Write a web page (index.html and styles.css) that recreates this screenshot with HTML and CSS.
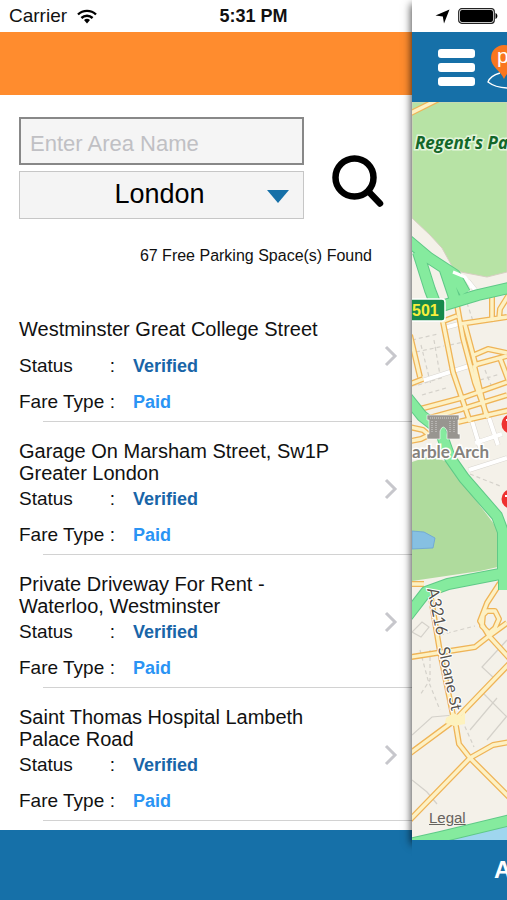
FILE: index.html
```html
<!DOCTYPE html>
<html lang="en">
<head>
  <meta charset="UTF-8"/>
  <meta name="viewport" content="width=device-width, initial-scale=1"/>
  <title>Parking</title>
  <link rel="stylesheet" href="styles.css">
</head>
<body>
  <div class="status-bar">
    <div class="carrier">
      <span>Carrier</span>
      <svg width="20" height="15" viewBox="0 0 20 15" fill="none" stroke="#000" stroke-width="2.4">
        <path d="M1 5.5a13 13 0 0 1 18 0"/>
        <path d="M4.4 9a8.2 8.2 0 0 1 11.2 0"/>
        <path d="M10 14.5l-3-3.4a4.4 4.4 0 0 1 6 0z" fill="#000" stroke="none"/>
      </svg>
    </div>
    <strong class="time">5:31 PM</strong>
    <div class="indicators">
      <svg width="15" height="15" viewBox="0 0 15 15"><path d="M14.5 .5L9 14.5 7.8 7.4.5 6.4z"/></svg>
      <svg width="40" height="16" viewBox="0 0 40 16">
        <rect x=".7" y=".7" width="35.6" height="14.6" rx="3" fill="#fff" stroke="#222" stroke-width="1.2"/>
        <rect x="2" y="2" width="33" height="12" rx="2"/>
        <path d="M37.5 5c2.5 1 2.5 5 0 6z"/>
      </svg>
    </div>
  </div>

  <div class="app">
    <aside class="drawer">
      <div class="drawer-header"></div>

      <form class="search">
        <div class="fields">
          <input class="area" type="text" placeholder="Enter Area Name" aria-label="Area name">
          <div class="city">
            <select aria-label="City">
              <option>London</option>
            </select>
            <svg class="arrow" width="22" height="13" viewBox="0 0 22 13"><path d="M0 0h22L11 13z" fill="#1670a8"/></svg>
          </div>
        </div>
        <button class="search-btn" type="button" aria-label="Search">
          <svg width="52" height="52" viewBox="0 0 52 52" fill="none" stroke="#000">
            <circle cx="22.5" cy="22.5" r="19" stroke-width="6.5"/>
            <path d="M37 37l11 11.5" stroke-width="6.5" stroke-linecap="round"/>
          </svg>
        </button>
      </form>

      <p class="found">67 Free Parking Space(s) Found</p>

      <ul class="results">
        <li>
          <a href="#">
            <div class="info">
              <h2>Westminster Great College Street</h2>
              <dl>
                <dt>Status</dt><dd class="verified">Verified</dd>
                <dt>Fare Type</dt><dd class="paid">Paid</dd>
              </dl>
            </div>
            <svg class="chevron" width="14" height="22" viewBox="0 0 14 22"><path d="M2 2l9 9-9 9"/></svg>
          </a>
        </li>
        <li>
          <a href="#">
            <div class="info">
              <h2>Garage On Marsham Street, Sw1P Greater London</h2>
              <dl>
                <dt>Status</dt><dd class="verified">Verified</dd>
                <dt>Fare Type</dt><dd class="paid">Paid</dd>
              </dl>
            </div>
            <svg class="chevron" width="14" height="22" viewBox="0 0 14 22"><path d="M2 2l9 9-9 9"/></svg>
          </a>
        </li>
        <li>
          <a href="#">
            <div class="info">
              <h2>Private Driveway For Rent - Waterloo, Westminster</h2>
              <dl>
                <dt>Status</dt><dd class="verified">Verified</dd>
                <dt>Fare Type</dt><dd class="paid">Paid</dd>
              </dl>
            </div>
            <svg class="chevron" width="14" height="22" viewBox="0 0 14 22"><path d="M2 2l9 9-9 9"/></svg>
          </a>
        </li>
        <li>
          <a href="#">
            <div class="info">
              <h2>Saint Thomas Hospital Lambeth Palace Road</h2>
              <dl>
                <dt>Status</dt><dd class="verified">Verified</dd>
                <dt>Fare Type</dt><dd class="paid">Paid</dd>
              </dl>
            </div>
            <svg class="chevron" width="14" height="22" viewBox="0 0 14 22"><path d="M2 2l9 9-9 9"/></svg>
          </a>
        </li>
      </ul>

      <div class="drawer-footer"></div>
    </aside>

    <main class="main">
      <div class="panel">
        <header class="main-header">
          <button class="menu" type="button" aria-label="Menu">
            <span></span><span></span><span></span>
          </button>
          <svg class="logo" width="50" height="48" viewBox="0 0 50 48">
            <path d="M13 30Q3 33 1 39q9 7 26 6 15-1 22-7-8-7-20-9" fill="none" stroke="#fff" stroke-width="1.4"/>
            <path d="M17 36C14 28 4 24 4 15a13 13 0 0 1 26 0c0 9-10 13-13 21z" fill="#f9761f"/>
            <text x="10" y="20" font-size="21" fill="#fff">p</text>
          </svg>
        </header>

        <div class="map">
          <svg class="map-canvas" viewBox="412 102 95 738" preserveAspectRatio="xMinYMin slice">
            <rect x="412" y="102" width="95" height="738" fill="#f4f1e9"/>

            <!-- parks and water -->
            <path d="M412 102h95v170l-20 5-26-5-8-4-11-20-12-13-18-17z" fill="#b7e3a5" stroke="#d5cfc0"/>
            <path d="M412 462l18-6 24 8 14 26 29 38 5 20v18l-22 5-68 10z" fill="#afdb9d"/>
            <path d="M412 531l12 1 11 6-2 10-21 1z" fill="#86c0e2" stroke="#6aa2d6" stroke-width=".8"/>
            <path d="M425 842l82-18v18z" fill="#9fd6ee"/>

            <!-- building lines -->
            <g fill="none" stroke="#d4d1ca" stroke-width="1.2">
              <path d="M507 640l-25 27 13 12M480 690l27 27M470 730l27-32M487 740l20-24M412 735l20-18 22-2M412 780l15 12 10 12M412 632l10-10 7 5-8 10z"/>
              <path stroke-dasharray="4 3" d="M420 650l8 30 12 30M430 650v30l-10 15M440 635l35-9M462 720l12 27M412 340l26-6M416 352l28-6M421 345l10 40M434 340l6 35M418 385l26-8M422 395l24-7M467 303l6 18M480 380l20-6M485 370l8 20M450 345l14-3M478 405l8-2M470 474l30 12"/>
            </g>

            <!-- minor roads -->
            <g fill="none" stroke="#d9d6d0" stroke-width="5">
              <path d="M472 421l9 30M489 418l9 27M475 443l27-9M469 470l38-12M444 328l18-5M412 384l60-19M468 281l8 10"/>
            </g>
            <g fill="none" stroke="#fff" stroke-width="4">
              <path d="M472 421l9 30M489 418l9 27M475 443l27-9M469 470l38-12M444 328l18-5M412 384l60-19M468 281l8 10"/>
            </g>

            <!-- main streets: casing first, fill on top -->
            <defs>
              <g id="streets" fill="none" stroke-linejoin="round">
                <path d="M405 116l34-17"/>
                <path d="M457 305l6 33 12 45 13 35M443 322l10 50 17 50M441 322l16-6M460 324l47-7M465 325l8 30 3 12M492 293v28M510 293l-10 16-1 10M474 355l14-6 19 4M474 365l33-9M474 365l12 50M410 335l10 42M410 384l13-5"/>
                <path d="M420 409l45-12 42-15M422 420l40-11 45-14M458 422l52-12M500 358l9 24M405 426l18 4 6 5-8 4-16 3M428 435l14-4"/>
                <path d="M431 598l9 54 14 68M405 658l70-11 14-11 22 24M500 583l-13 20-7 18 9 15 18-13M487 611h8l4 8-4 9-6 5-7-7 1-11z"/>
                <path d="M405 757l50-37 54-56M455 720l4 24 11 14 42 42M405 825l65-67 23-13 17-3M412 584h12"/>
              </g>
            </defs>
            <use href="#streets" stroke="#efb457" stroke-width="6"/>
            <use href="#streets" stroke="#fdf1c4" stroke-width="3.4"/>
            <path d="M446 718l7-5 8 3 4-5v13l-11 2-9-3z" fill="#fdf2bf"/>

            <!-- trunk roads -->
            <defs>
              <g id="trunk" fill="none" stroke-linejoin="round">
                <path d="M405 238l24 20 26 17 10 18M418 252l12 38 7 18M445 270l10 30M420 313l28-9 30-9 35-8"/>
                <path d="M406 396l16 20 18 14 10 28 14 20 33 38 6 16v42M406 618l20-26 22-8 62-12M504 565v25"/>
                <path d="M405 845l35-8 75-18"/>
              </g>
            </defs>
            <use href="#trunk" stroke="#5fc987" stroke-width="12"/>
            <use href="#trunk" stroke="#85eb9e" stroke-width="10"/>
            <path d="M453 272l12 5 7 11" fill="none" stroke="#fff" stroke-width="3"/>

            <!-- marble arch -->
            <g fill="#989590" stroke="#fff" stroke-width=".6">
              <path d="M427 415h32v5h-1v14h2v5h-13v-8q-4-8-7 0v8h-13v-5h2v-14h-2z"/>
              <path d="M432 421v12M436 421v12M450 421v12M454 421v12M430 418h27" stroke-dasharray="1 1"/>
            </g>

            <g class="pins" fill="#ee3130">
              <circle cx="511" cy="424" r="9.5"/>
              <circle cx="511" cy="499" r="9.5"/>
            </g>
            <path d="M506 420h4M505 496h4" stroke="#fff" stroke-width="2"/>

            <path d="M405 299h37q3 0 3 3v16q0 3-3 3h-37z" fill="#16894b" stroke="#fff" stroke-width="1.5"/>
            <text class="shield" x="412" y="316">501</text>

            <text class="park-label" x="415" y="149">Regent's Park</text>
            <text class="place-label" x="412" y="458">arble Arch</text>
            <text class="street-label" transform="translate(427 589) rotate(78)">A3216</text>
            <text class="street-label" transform="translate(438 648) rotate(78)">Sloane St</text>
          </svg>
          <a class="legal" href="#">Legal</a>
        </div>
      </div>

      <footer class="main-footer">
        <button type="button">Area</button>
      </footer>
    </main>
  </div>
</body>
</html>
```

FILE: styles.css
```css
* {
  box-sizing: border-box;
}
body {
  margin: 0;
  font-family: "Liberation Sans", Arial, sans-serif;
  color: #111;
  background: #fff;
  overflow-x: hidden;
}
button {
  border: none;
  padding: 0;
  background: none;
  cursor: pointer;
}
svg {
  display: block;
}

/* status bar lies over both panels */
.status-bar {
  position: absolute;
  top: 0;
  left: 0;
  right: 0;
  z-index: 3;
  height: 32px;
  padding: 0 9px;
  display: grid;
  grid-template-columns: 1fr auto 1fr;
  align-items: center;
  font-size: 19px;
}
.carrier {
  display: flex;
  align-items: center;
  gap: 10px;
}
.time {
  font-size: 18px;
}
.indicators {
  display: flex;
  align-items: center;
  justify-content: flex-end;
  gap: 8px;
}

.app {
  display: grid;
  grid-template-columns: minmax(0, 1fr) 95px;
  min-height: 100vh;
}

/* drawer */
.drawer {
  display: flex;
  flex-direction: column;
  padding-top: 32px;
}
.drawer-header {
  height: 63px;
  background: #ff8c2e;
}
.search {
  display: flex;
  align-items: center;
  gap: 28px;
  padding: 22px 28px 0 19px;
}
.fields {
  flex: 1;
  display: flex;
  flex-direction: column;
  gap: 6px;
}
.area {
  width: 100%;
  height: 48px;
  padding: 5px 9px 0;
  border: 2px solid #888;
  background: #f5f5f5;
  font: 22px "Liberation Sans", Arial, sans-serif;
}
.area::placeholder {
  color: #c0c0c4;
}
.city {
  position: relative;
}
.city select {
  width: 100%;
  height: 48px;
  padding: 0 24px 2px 20px;
  border: 1px solid #c6c6c6;
  border-radius: 0;
  background: #f4f4f4;
  appearance: none;
  font: 27px "Liberation Sans", Arial, sans-serif;
  color: #000;
  text-align: center;
  text-align-last: center;
}
.arrow {
  position: absolute;
  right: 15px;
  top: 19px;
  pointer-events: none;
}
.search-btn {
  padding-top: 26px;
}
.found {
  margin: 26px 40px 0 0;
  font-size: 16px;
  line-height: 22px;
  text-align: right;
}

.results {
  flex: 1;
  margin: 22px 0 0;
  padding: 0;
  list-style: none;
}
.results a {
  display: flex;
  align-items: center;
  height: 133px;
  padding: 0 14px 0 19px;
  color: inherit;
  text-decoration: none;
  background: linear-gradient(#d2d2d2, #d2d2d2) 43px 100% / 100% 1px no-repeat;
}
.info {
  flex: 1;
  padding-top: 8px;
}
.info h2 {
  display: flex;
  align-items: center;
  max-width: 320px;
  height: 44px;
  margin: 0;
  font-size: 20px;
  line-height: 22px;
  font-weight: normal;
}
.info dl {
  display: grid;
  grid-template-columns: 96px 1fr;
  column-gap: 18px;
  row-gap: 14px;
  margin: 4px 0 0;
  font-size: 19px;
  line-height: 22px;
}
.info dt {
  display: flex;
  justify-content: space-between;
}
.info dt::after {
  content: ":";
}
.info dd {
  margin: 0;
  font-size: 18px;
  font-weight: bold;
}
.verified {
  color: #1965a8;
}
.paid {
  color: #2a94f4;
}
.chevron {
  fill: none;
  stroke: #c7c7cc;
  stroke-width: 3;
}
.drawer-footer {
  height: 70px;
  background: #1670a8;
}

/* map panel */
.main {
  display: flex;
  flex-direction: column;
  min-width: 0;
}
.panel {
  flex: 1;
  display: flex;
  flex-direction: column;
  padding-top: 32px;
  background: #fff;
  box-shadow: -1px 4px 8px rgba(0, 0, 0, 0.7);
}
.main-header {
  display: flex;
  align-items: center;
  gap: 12px;
  height: 70px;
  padding-left: 26px;
  background: #1670a8;
  overflow: hidden;
}
.menu {
  display: flex;
  flex: none;
  flex-direction: column;
  gap: 5px;
  width: 37px;
}
.menu span {
  height: 9px;
  border-radius: 3px;
  background: #fff;
}
.logo {
  flex: none;
}
.map {
  position: relative;
  flex: 1;
  overflow: hidden;
}
.map-canvas {
  position: absolute;
  width: 100%;
  height: 100%;
}
.park-label {
  font: italic bold 17px "Open Sans", sans-serif;
  fill: #13672a;
  stroke: #e4f5dc;
  stroke-width: 3px;
  paint-order: stroke;
}
.place-label {
  font: bold 17px Lato, sans-serif;
  fill: #85827d;
  stroke: #fff;
  stroke-width: 3px;
  paint-order: stroke;
}
.street-label {
  font: 16px Lato, sans-serif;
  fill: #55524d;
  stroke: #fff;
  stroke-width: 2px;
  paint-order: stroke;
}
.shield {
  font: bold 16px "Liberation Sans", Arial, sans-serif;
  fill: #f5ee3c;
}
.legal {
  position: absolute;
  left: 17px;
  bottom: 14px;
  font-size: 15px;
  color: #66635e;
}
.main-footer {
  position: relative;
  display: flex;
  height: 60px;
  padding-left: 82px;
  background: #1670a8;
  overflow: hidden;
}
.main-footer button {
  color: #fff;
  font: bold 24px "Liberation Sans", Arial, sans-serif;
}
```
